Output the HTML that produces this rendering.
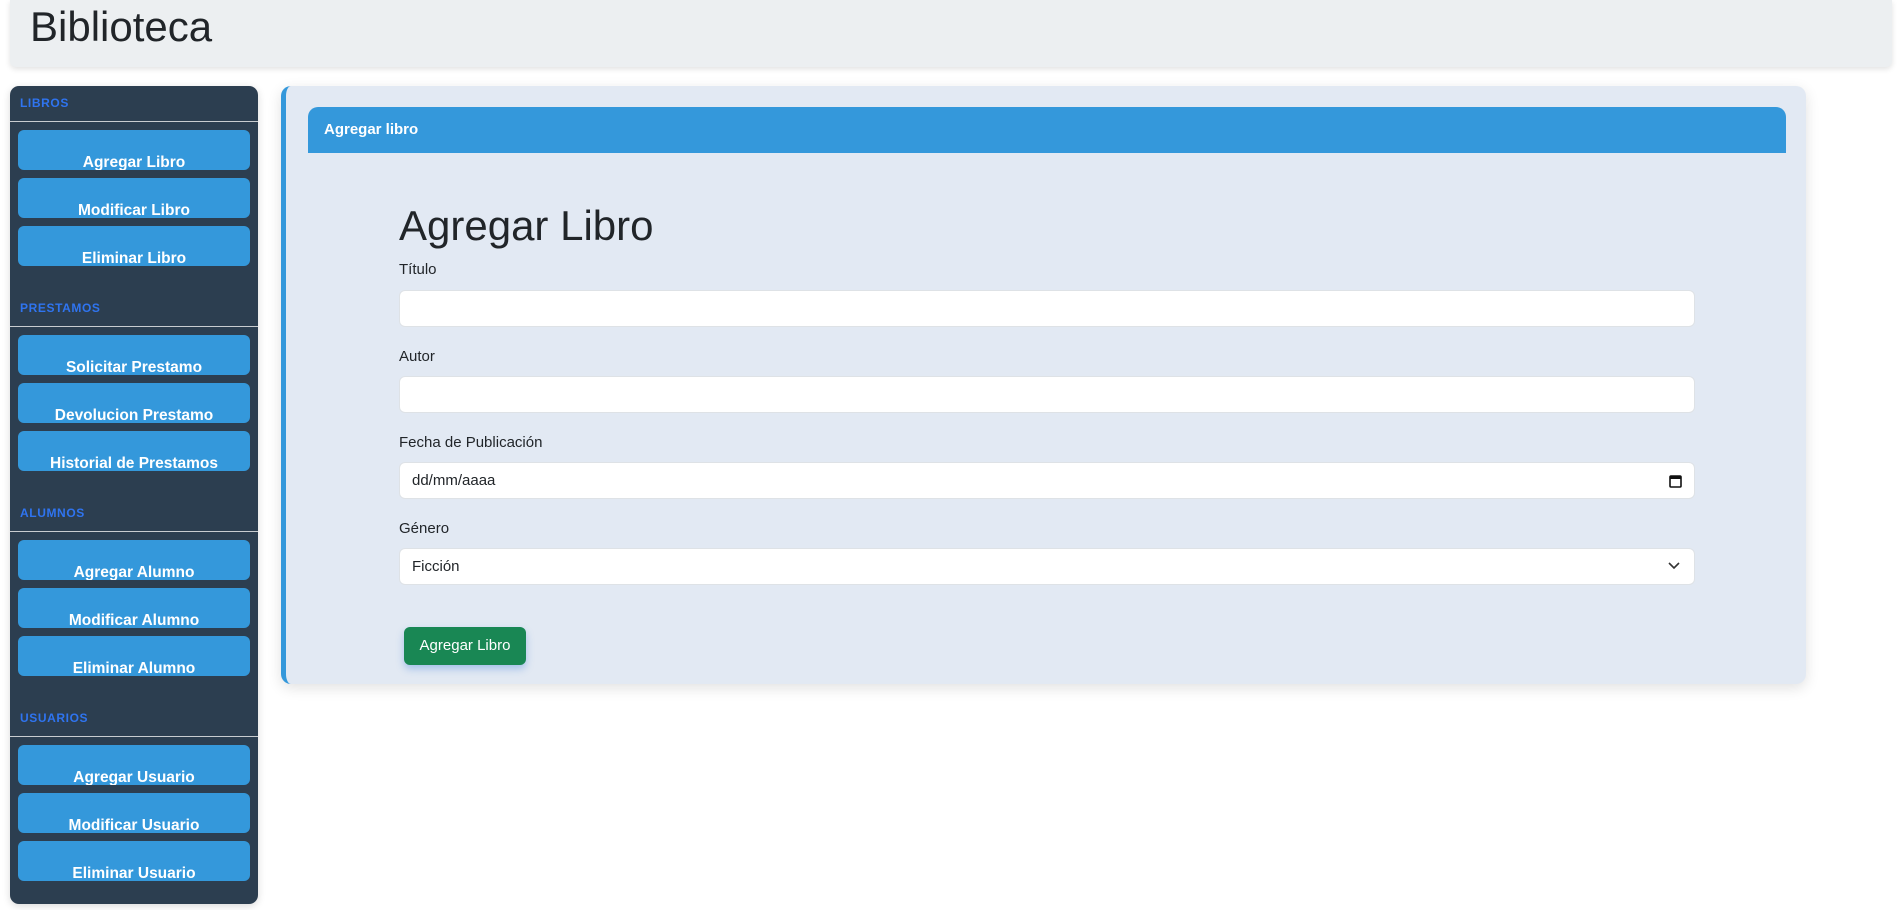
<!DOCTYPE html>
<html><head><meta charset="utf-8"><style>
*{box-sizing:border-box;margin:0;padding:0}
body{width:1902px;height:910px;background:#fff;font-family:"Liberation Sans",Arial,sans-serif;position:relative;overflow:hidden}
.hdr{position:absolute;left:10px;top:0;width:1882px;height:67px;background:#eceff1;border-radius:0 0 6px 6px;box-shadow:0 2px 6px rgba(0,0,0,.12)}
.hdr h1{position:absolute;left:20px;top:3px;font-weight:400;font-size:42px;color:#212529}
.side{position:absolute;left:10px;top:86px;width:248px;height:818px;background:#2c3e50;border-radius:9px;box-shadow:0 2px 8px rgba(0,0,0,.15)}
.sec{position:absolute;left:0;width:248px}
.sec .t{position:absolute;left:10px;top:-25px;font-size:12px;font-weight:bold;color:#2f74f0;letter-spacing:0.6px}
.sec .ln{position:absolute;left:0;top:0;width:248px;height:1px;background:#c8ccd0}
.btn{position:absolute;left:8px;width:232px;height:40px;background:#3498db;border-radius:6px;color:#fff;font-weight:bold;font-size:15.5px;text-align:center;line-height:17px;padding-top:24px;overflow:hidden}
.card{position:absolute;left:281px;top:86px;width:1525px;height:598px;background:#e2e9f3;border-left:5px solid #3498db;border-radius:10px;box-shadow:0 4px 14px rgba(0,0,0,.12)}
.ch{position:absolute;left:22px;top:21px;width:1478px;height:46px;background:#3498db;border-radius:10px 10px 0 0;color:#fff;font-weight:bold;font-size:15px;padding:14px 0 0 16px}
h2{position:absolute;left:399px;top:202px;font-size:42px;font-weight:400;color:#212529}
.lb{position:absolute;left:399px;font-size:15px;color:#212529}
.in{position:absolute;left:399px;width:1296px;height:37px;background:#fff;border:1px solid #dee2e6;border-radius:6px;font-size:15px;color:#212529;padding:9px 12px}
.go{position:absolute;left:404px;top:627px;width:122px;height:38px;background:#198754;border-radius:6px;color:#fff;font-size:15px;text-align:center;line-height:38px;box-shadow:0 4px 8px rgba(52,120,219,.35)}
</style></head><body>
<div class="hdr"><h1>Biblioteca</h1></div>
<div class="side">
 <div class="sec" style="top:35px"><div class="t">LIBROS</div><div class="ln"></div>
  <div class="btn" style="top:9px">Agregar Libro</div><div class="btn" style="top:57px">Modificar Libro</div><div class="btn" style="top:105px">Eliminar Libro</div></div>
 <div class="sec" style="top:240px"><div class="t">PRESTAMOS</div><div class="ln"></div>
  <div class="btn" style="top:9px">Solicitar Prestamo</div><div class="btn" style="top:57px">Devolucion Prestamo</div><div class="btn" style="top:105px">Historial de Prestamos</div></div>
 <div class="sec" style="top:445px"><div class="t">ALUMNOS</div><div class="ln"></div>
  <div class="btn" style="top:9px">Agregar Alumno</div><div class="btn" style="top:57px">Modificar Alumno</div><div class="btn" style="top:105px">Eliminar Alumno</div></div>
 <div class="sec" style="top:650px"><div class="t">USUARIOS</div><div class="ln"></div>
  <div class="btn" style="top:9px">Agregar Usuario</div><div class="btn" style="top:57px">Modificar Usuario</div><div class="btn" style="top:105px">Eliminar Usuario</div></div>
</div>
<div class="card"><div class="ch">Agregar libro</div></div>
<h2>Agregar Libro</h2>
<div class="lb" style="top:261px">Título</div>
<div class="in" style="top:290px"></div>
<div class="lb" style="top:348px">Autor</div>
<div class="in" style="top:376px"></div>
<div class="lb" style="top:434px">Fecha de Publicación</div>
<div class="in" style="top:462px">dd/mm/aaaa<svg style="position:absolute;right:12px;top:11px" width="13" height="14" viewBox="0 0 13 14"><rect x="1" y="2" width="11" height="11" rx="1" fill="none" stroke="#111" stroke-width="1.6"/><rect x="1" y="2" width="11" height="3" fill="#111"/></svg></div>
<div class="lb" style="top:520px">Género</div>
<div class="in" style="top:548px">Ficción<svg style="position:absolute;right:14px;top:13px" width="12" height="8" viewBox="0 0 12 8"><path d="M1 1l5 5 5-5" fill="none" stroke="#333" stroke-width="1.6"/></svg></div>
<div class="go">Agregar Libro</div>
</body></html>
